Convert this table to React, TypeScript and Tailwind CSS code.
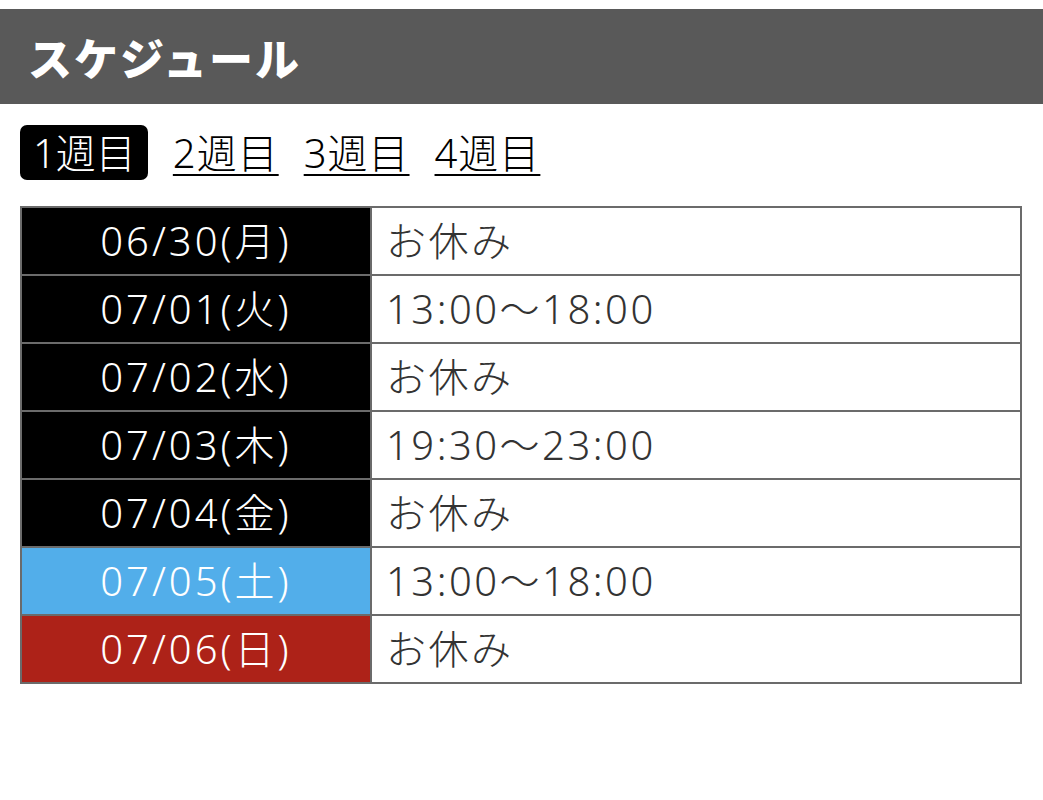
import React from "react";

type Row = { date: string; time: string; tone: "black" | "sat" | "sun" };

const rows: Row[] = [
  { date: "06/30(月)", time: "お休み", tone: "black" },
  { date: "07/01(火)", time: "13:00〜18:00", tone: "black" },
  { date: "07/02(水)", time: "お休み", tone: "black" },
  { date: "07/03(木)", time: "19:30〜23:00", tone: "black" },
  { date: "07/04(金)", time: "お休み", tone: "black" },
  { date: "07/05(土)", time: "13:00〜18:00", tone: "sat" },
  { date: "07/06(日)", time: "お休み", tone: "sun" },
];

const weeks = ["1週目", "2週目", "3週目", "4週目"];

function toneClass(tone: Row["tone"]) {
  if (tone === "sat") return "bg-[#52aeea]";
  if (tone === "sun") return "bg-[#ad2218]";
  return "bg-black";
}

export default function App() {
  return (
    <div
      className="min-h-[800px] w-[1043px] bg-white pt-[9px]"
      style={{ fontFamily: '"Noto Sans", "Noto Sans CJK JP", sans-serif' }}
    >
      <header className="flex h-[95px] items-center bg-[#595959] px-[28px]">
        <h1
          className="text-[44px] font-black leading-none tracking-[2px] text-white"
          style={{ fontFamily: '"Noto Sans CJK JP", sans-serif' }}
        >
          スケジュール
        </h1>
      </header>

      <div className="px-5">
        <nav className="mt-[21px] flex items-center gap-[25px]">
          {weeks.map((w, i) =>
            i === 0 ? (
              <span key={w} className="flex h-[55px] items-center rounded-[7px] bg-black pl-[13px] pr-[12px] text-[40px] font-light leading-none text-white">
                {w}
              </span>
            ) : (
              <a key={w} href="#" className="text-[40px] font-light leading-none tracking-[1px] text-black underline decoration-2 underline-offset-[6px]">
                {w}
              </a>
            )
          )}
        </nav>

        <table className="mt-[26px] w-[1002px] border-collapse border-2 border-[#6b6b6b]">
          <tbody>
            {rows.map((r) => (
              <tr key={r.date} className="h-[68px]">
                <td className={`w-[350px] border-2 border-[#6b6b6b] text-center text-[40px] font-light leading-none tracking-[3px] text-white ${toneClass(r.tone)}`}>
                  {r.date}
                </td>
                <td className="border-2 border-[#6b6b6b] pl-[14px] text-[40px] font-light leading-none tracking-[2.5px] text-[#333]">
                  {r.time}
                </td>
              </tr>
            ))}
          </tbody>
        </table>
      </div>
    </div>
  );
}
